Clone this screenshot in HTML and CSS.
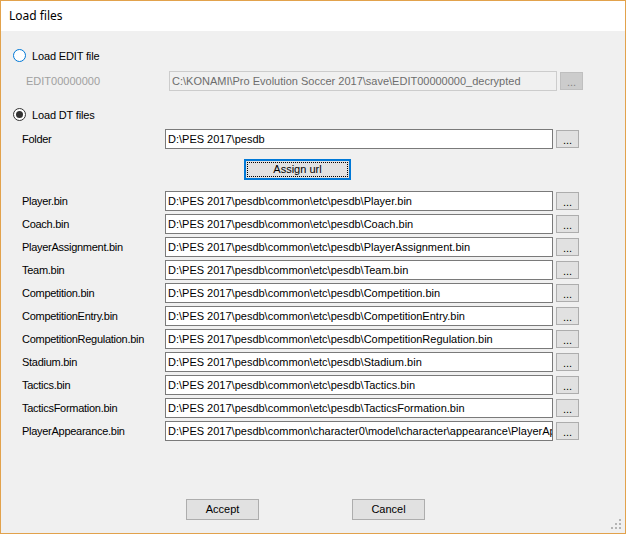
FILE: index.html
```html
<!DOCTYPE html>
<html>
<head>
<meta charset="utf-8">
<link rel="stylesheet" href="styles.css">
</head>
<body>
<div class="window">
  <div class="titlebar">Load files</div>
  <div class="content">
    <div class="radio-row r1">
      <span class="radio focus"></span><span class="rlabel">Load EDIT file</span>
    </div>
    <div class="row edit-row">
      <span class="label disabled">EDIT00000000</span>
      <div class="textbox tb-disabled"><span class="tbtext">C:\KONAMI\Pro Evolution Soccer 2017\save\EDIT00000000_decrypted</span></div>
      <div class="btn btn-disabled">...</div>
    </div>
    <div class="radio-row r2">
      <span class="radio checked"></span><span class="rlabel">Load DT files</span>
    </div>
    <div class="row folder-row">
      <span class="label">Folder</span>
      <div class="textbox"><span class="tbtext">D:\PES 2017\pesdb</span></div>
      <div class="btn">...</div>
    </div>
    <div class="assign-row">
      <div class="btn assign"><span class="focus-rect">Assign url</span></div>
    </div>
    <div class="files">
      <div class="row"><span class="label">Player.bin</span><div class="textbox"><span class="tbtext">D:\PES 2017\pesdb\common\etc\pesdb\Player.bin</span></div><div class="btn">...</div></div>
      <div class="row"><span class="label">Coach.bin</span><div class="textbox"><span class="tbtext">D:\PES 2017\pesdb\common\etc\pesdb\Coach.bin</span></div><div class="btn">...</div></div>
      <div class="row"><span class="label">PlayerAssignment.bin</span><div class="textbox"><span class="tbtext">D:\PES 2017\pesdb\common\etc\pesdb\PlayerAssignment.bin</span></div><div class="btn">...</div></div>
      <div class="row"><span class="label">Team.bin</span><div class="textbox"><span class="tbtext">D:\PES 2017\pesdb\common\etc\pesdb\Team.bin</span></div><div class="btn">...</div></div>
      <div class="row"><span class="label">Competition.bin</span><div class="textbox"><span class="tbtext">D:\PES 2017\pesdb\common\etc\pesdb\Competition.bin</span></div><div class="btn">...</div></div>
      <div class="row"><span class="label">CompetitionEntry.bin</span><div class="textbox"><span class="tbtext">D:\PES 2017\pesdb\common\etc\pesdb\CompetitionEntry.bin</span></div><div class="btn">...</div></div>
      <div class="row"><span class="label">CompetitionRegulation.bin</span><div class="textbox"><span class="tbtext">D:\PES 2017\pesdb\common\etc\pesdb\CompetitionRegulation.bin</span></div><div class="btn">...</div></div>
      <div class="row"><span class="label">Stadium.bin</span><div class="textbox"><span class="tbtext">D:\PES 2017\pesdb\common\etc\pesdb\Stadium.bin</span></div><div class="btn">...</div></div>
      <div class="row"><span class="label">Tactics.bin</span><div class="textbox"><span class="tbtext">D:\PES 2017\pesdb\common\etc\pesdb\Tactics.bin</span></div><div class="btn">...</div></div>
      <div class="row"><span class="label">TacticsFormation.bin</span><div class="textbox"><span class="tbtext">D:\PES 2017\pesdb\common\etc\pesdb\TacticsFormation.bin</span></div><div class="btn">...</div></div>
      <div class="row"><span class="label">PlayerAppearance.bin</span><div class="textbox"><span class="tbtext">D:\PES 2017\pesdb\common\character0\model\character\appearance\PlayerAppearance.bin</span></div><div class="btn">...</div></div>
    </div>
    <div class="actions">
      <div class="btn action">Accept</div>
      <div class="btn action">Cancel</div>
    </div>
  </div>
  <svg class="grip" width="12" height="12" viewBox="0 0 12 12">
    <rect x="8" y="0" width="2" height="2" fill="#b4b4b4"/>
    <rect x="4" y="4" width="2" height="2" fill="#b4b4b4"/>
    <rect x="8" y="4" width="2" height="2" fill="#b4b4b4"/>
    <rect x="0" y="8" width="2" height="2" fill="#b4b4b4"/>
    <rect x="4" y="8" width="2" height="2" fill="#b4b4b4"/>
    <rect x="8" y="8" width="2" height="2" fill="#b4b4b4"/>
  </svg>
</div>
</body>
</html>
```

FILE: styles.css
```css
html, body {
  margin: 0;
  padding: 0;
}
body {
  width: 626px;
  height: 534px;
  overflow: hidden;
  font-family: "Liberation Sans", Arial, sans-serif;
  font-size: 11px;
  color: #000;
}
.window {
  position: relative;
  box-sizing: border-box;
  width: 626px;
  height: 534px;
  border: 1px solid #e2a24c;
  background: #f0f0f0;
  display: flex;
  flex-direction: column;
}
.titlebar {
  height: 30px;
  background: #fff;
  font-family: "Noto Sans", "Open Sans", sans-serif;
  font-size: 12px;
  line-height: 30px;
  padding-left: 8px;
  color: #000;
}
.content {
  display: flex;
  flex-direction: column;
}
.radio-row {
  display: flex;
  align-items: center;
  height: 13px;
  padding-left: 12px;
}
.r1 { margin-top: 18px; }
.r2 { margin-top: 17px; }
.radio {
  box-sizing: border-box;
  width: 13px;
  height: 13px;
  border-radius: 50%;
  border: 1px solid #333;
  background: #fff;
  display: flex;
  align-items: center;
  justify-content: center;
}
.radio.focus {
  border-color: #0078d7;
}
.radio.checked::after {
  content: "";
  width: 7px;
  height: 7px;
  border-radius: 50%;
  background: #333;
}
.rlabel {
  margin-left: 6px;
  font-size: 11px;
  letter-spacing: -0.15px;
}
.row {
  display: flex;
  align-items: center;
  height: 20px;
  padding-left: 21px;
}
.label {
  width: 143px;
  flex: none;
  white-space: nowrap;
  letter-spacing: -0.28px;
}
.label.disabled {
  color: #a0a0a0;
  letter-spacing: 0;
}
.edit-row {
  margin-top: 9px;
  padding-left: 25px;
}
.folder-row {
  margin-top: 8px;
}
.textbox {
  box-sizing: border-box;
  width: 388px;
  height: 20px;
  flex: none;
  border: 1px solid #7a7a7a;
  background: #fff;
  padding-left: 2px;
  line-height: 18px;
  white-space: nowrap;
  overflow: hidden;
}
.tbtext {
  display: block;
  overflow: hidden;
  width: 100%;
}
.tb-disabled {
  border-color: #cccccc;
  background: #f0f0f0;
  color: #6d6d6d;
}
.btn {
  box-sizing: border-box;
  width: 23px;
  height: 18px;
  flex: none;
  margin-left: 3px;
  border: 1px solid #adadad;
  background: #e1e1e1;
  display: flex;
  align-items: center;
  justify-content: center;
  line-height: 1;
}
.row .btn {
  padding-top: 3px;
}
.btn-disabled {
  background: #cccccc;
  border-color: #bfbfbf;
  color: #838383;
}
.assign-row {
  display: flex;
  margin-top: 10px;
  padding-left: 243px;
}
.btn.assign {
  width: 107px;
  height: 21px;
  margin-left: 0;
  border: 2px solid #0078d7;
  padding: 1px;
}
.focus-rect {
  box-sizing: border-box;
  width: 100%;
  height: 100%;
  border: 1px dotted #000;
  display: flex;
  align-items: center;
  justify-content: center;
}
.files {
  display: flex;
  flex-direction: column;
  gap: 3px;
  margin-top: 11px;
}
.actions {
  display: flex;
  margin-top: 58px;
  padding-left: 185px;
  gap: 93px;
}
.btn.action {
  width: 73px;
  height: 21px;
  margin-left: 0;
}
.grip {
  position: absolute;
  right: 2px;
  bottom: 2px;
}
```
